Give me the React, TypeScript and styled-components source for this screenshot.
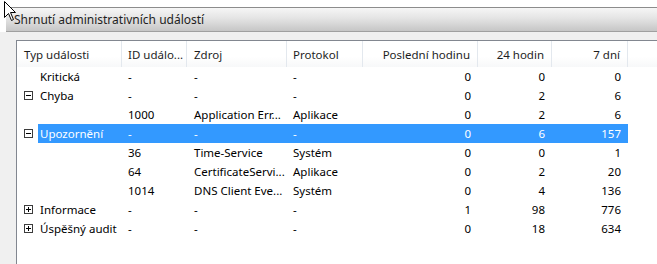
import React from 'react';
import styled, { createGlobalStyle } from 'styled-components';

const GlobalStyle = createGlobalStyle`
  html, body {
    margin: 0;
    padding: 0;
    background: #ffffff;
  }
  body {
    font-family: "Noto Sans", "Open Sans", sans-serif;
    font-size: 11.5px;
    color: #000;
  }
`;

type Kind = 'none' | 'minus' | 'plus' | 'child';

interface EventRow {
  kind: Kind;
  label: string;
  id: string;
  source: string;
  protocol: string;
  hour: string;
  day: string;
  week: string;
  selected?: boolean;
}

const rows: EventRow[] = [
  { kind: 'none', label: 'Kritická', id: '-', source: '-', protocol: '-', hour: '0', day: '0', week: '0' },
  { kind: 'minus', label: 'Chyba', id: '-', source: '-', protocol: '-', hour: '0', day: '2', week: '6' },
  { kind: 'child', label: '', id: '1000', source: 'Application Err...', protocol: 'Aplikace', hour: '0', day: '2', week: '6' },
  { kind: 'minus', label: 'Upozornění', id: '-', source: '-', protocol: '-', hour: '0', day: '6', week: '157', selected: true },
  { kind: 'child', label: '', id: '36', source: 'Time-Service', protocol: 'Systém', hour: '0', day: '0', week: '1' },
  { kind: 'child', label: '', id: '64', source: 'CertificateServi...', protocol: 'Aplikace', hour: '0', day: '2', week: '20' },
  { kind: 'child', label: '', id: '1014', source: 'DNS Client Eve...', protocol: 'Systém', hour: '0', day: '4', week: '136' },
  { kind: 'plus', label: 'Informace', id: '-', source: '-', protocol: '-', hour: '1', day: '98', week: '776' },
  { kind: 'plus', label: 'Úspěšný audit', id: '-', source: '-', protocol: '-', hour: '0', day: '18', week: '634' },
];

const COLUMNS = '105px 65px 100px 76px 115px 74px 76px 1fr';

const Page = styled.div`
  width: 657px;
  height: 264px;
  position: relative;
  overflow: hidden;
  display: flex;
  flex-direction: column;
  background: #ffffff;
  padding-top: 7px;
  box-sizing: border-box;
`;

const TitleBar = styled.div`
  margin-left: 6px;
  height: 25px;
  box-sizing: border-box;
  border-top: 1px solid #8c8c8c;
  border-bottom: 1px solid #a0a0a0;
  background: linear-gradient(to bottom, #f6f6f6 0%, #e4e4e4 45%, #c6c6c6 100%);
  display: flex;
  align-items: center;
  padding-left: 8px;
  font-size: 12px;
  color: #1e1e1e;
`;

const Body = styled.div`
  flex: 1;
  background: #f0f0f0;
  padding: 8px 0 0 16px;
  display: flex;
`;

const ListBox = styled.div`
  flex: 1;
  background: #ffffff;
  border-left: 1px solid #828790;
  border-top: 1px solid #828790;
`;

const HeaderRow = styled.div`
  display: grid;
  grid-template-columns: ${COLUMNS};
  height: 26px;
  background: linear-gradient(to bottom, #ffffff 0%, #ffffff 60%, #f7f8f9 100%);
`;

const HeaderCell = styled.div<{ $right?: boolean; $pad?: number }>`
  display: flex;
  align-items: center;
  justify-content: ${(p) => (p.$right ? 'flex-end' : 'flex-start')};
  padding: 0 ${(p) => (p.$right ? 7 : 0)}px 0 ${(p) => p.$pad ?? 6}px;
  border-right: 1px solid #e3e8ee;
  color: #1e1e1e;
  white-space: nowrap;
  &:last-child {
    border-right: none;
  }
`;

const Row = styled.div`
  display: grid;
  grid-template-columns: ${COLUMNS};
  height: 19px;
`;

const TypeCell = styled.div`
  display: flex;
  align-items: center;
  padding-left: 7px;
  gap: 5px;
`;

const Expander = styled.svg<{ $hidden?: boolean }>`
  width: 9px;
  height: 9px;
  flex: none;
  display: block;
  visibility: ${(p) => (p.$hidden ? 'hidden' : 'visible')};
`;

const Label = styled.span<{ $selected?: boolean }>`
  flex: 1;
  align-self: stretch;
  display: flex;
  align-items: center;
  padding-left: 2px;
  white-space: nowrap;
  background: ${(p) => (p.$selected ? '#3399ff' : 'transparent')};
  color: ${(p) => (p.$selected ? '#ffffff' : '#000000')};
`;

const Cell = styled.div<{ $right?: boolean; $selected?: boolean; $pad?: number }>`
  display: flex;
  align-items: center;
  justify-content: ${(p) => (p.$right ? 'flex-end' : 'flex-start')};
  padding: 0 ${(p) => (p.$right ? 7 : 0)}px 0 ${(p) => p.$pad ?? 6}px;
  white-space: nowrap;
  background: ${(p) => (p.$selected ? '#3399ff' : 'transparent')};
  color: ${(p) => (p.$selected ? '#ffffff' : '#000000')};
`;

const Cursor = styled.svg`
  position: absolute;
  left: 4px;
  top: 1px;
`;

const ExpanderIcon: React.FC<{ kind: Kind }> = ({ kind }) => (
  <Expander $hidden={kind === 'none' || kind === 'child'} viewBox="0 0 9 9">
    <rect x="0.5" y="0.5" width="8" height="8" fill="#fff" stroke="#3c3c3c" />
    <line x1="2" y1="4.5" x2="7" y2="4.5" stroke="#000" />
    {kind === 'plus' && <line x1="4.5" y1="2" x2="4.5" y2="7" stroke="#000" />}
  </Expander>
);

export default function App() {
  return (
    <>
      <GlobalStyle />
      <Page>
        <TitleBar>Shrnutí administrativních událostí</TitleBar>
        <Body>
          <ListBox>
            <HeaderRow>
              <HeaderCell $pad={7}>Typ události</HeaderCell>
              <HeaderCell>ID událo...</HeaderCell>
              <HeaderCell $pad={7}>Zdroj</HeaderCell>
              <HeaderCell>Protokol</HeaderCell>
              <HeaderCell $right>Poslední hodinu</HeaderCell>
              <HeaderCell $right>24 hodin</HeaderCell>
              <HeaderCell $right>7 dní</HeaderCell>
              <HeaderCell />
            </HeaderRow>
            {rows.map((r, i) => (
              <Row key={i}>
                <TypeCell>
                  <ExpanderIcon kind={r.kind} />
                  <Label $selected={r.selected}>{r.label}</Label>
                </TypeCell>
                <Cell $selected={r.selected}>{r.id}</Cell>
                <Cell $selected={r.selected} $pad={7}>{r.source}</Cell>
                <Cell $selected={r.selected}>{r.protocol}</Cell>
                <Cell $selected={r.selected} $right>{r.hour}</Cell>
                <Cell $selected={r.selected} $right>{r.day}</Cell>
                <Cell $selected={r.selected} $right>{r.week}</Cell>
                <Cell />
              </Row>
            ))}
          </ListBox>
        </Body>
        <Cursor width="13" height="21" viewBox="0 0 13 21">
          <path
            d="M0.5 0.5 L0.5 16.5 L4.5 12.5 L7.5 19.5 L9.5 18.5 L6.5 11.5 L11.5 11.5 Z"
            fill="#ffffff"
            stroke="#000000"
            strokeWidth="1"
          />
        </Cursor>
      </Page>
    </>
  );
}
